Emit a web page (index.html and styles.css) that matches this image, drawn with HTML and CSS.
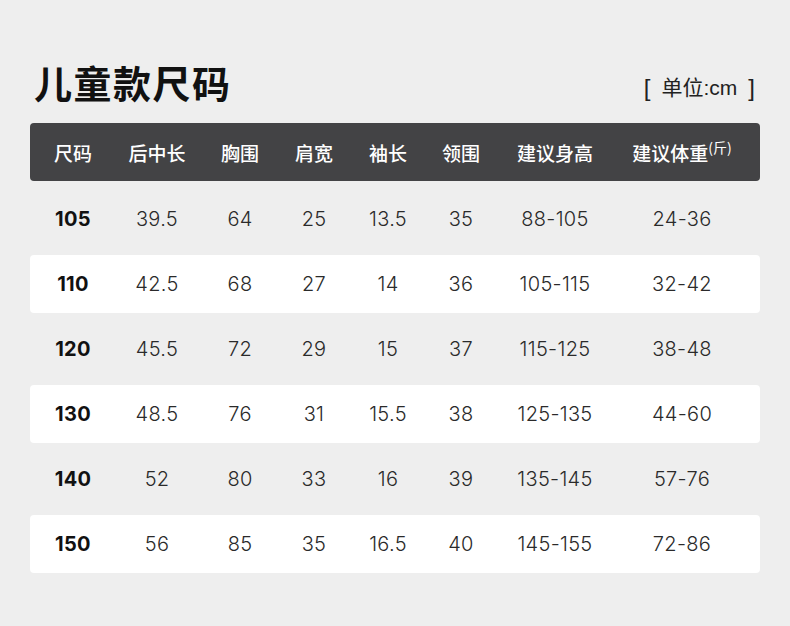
FILE: index.html
```html
<!DOCTYPE html>
<html lang="zh">
<head>
<meta charset="utf-8">
<link rel="stylesheet" href="styles.css">
</head>
<body>
<div class="page">
  <div class="head">
    <h1 class="title">儿童款尺码</h1>
    <div class="unit"><span class="br">[</span><span class="ut">单位:cm</span><span class="br">]</span></div>
  </div>
  <div class="table">
    <div class="row hdr">
      <div>尺码</div><div>后中长</div><div>胸围</div><div>肩宽</div><div>袖长</div><div>领围</div><div>建议身高</div><div>建议体重<sup>(斤)</sup></div>
    </div>
    <div class="row"><div class="sz">105</div><div>39.5</div><div>64</div><div>25</div><div>13.5</div><div>35</div><div>88-105</div><div>24-36</div></div>
    <div class="row w"><div class="sz">110</div><div>42.5</div><div>68</div><div>27</div><div>14</div><div>36</div><div>105-115</div><div>32-42</div></div>
    <div class="row"><div class="sz">120</div><div>45.5</div><div>72</div><div>29</div><div>15</div><div>37</div><div>115-125</div><div>38-48</div></div>
    <div class="row w"><div class="sz">130</div><div>48.5</div><div>76</div><div>31</div><div>15.5</div><div>38</div><div>125-135</div><div>44-60</div></div>
    <div class="row"><div class="sz">140</div><div>52</div><div>80</div><div>33</div><div>16</div><div>39</div><div>135-145</div><div>57-76</div></div>
    <div class="row w"><div class="sz">150</div><div>56</div><div>85</div><div>35</div><div>16.5</div><div>40</div><div>145-155</div><div>72-86</div></div>
  </div>
</div>
</body>
</html>
```
FILE: styles.css
```css
html, body { margin: 0; padding: 0; }
body {
  background: #eeeeee;
  width: 790px;
  height: 626px;
  overflow: hidden;
  font-family: "Noto Sans CJK SC", sans-serif;
}
.page { padding: 58px 30px 0 30px; }
.head {
  display: flex;
  justify-content: space-between;
  align-items: flex-end;
  height: 48px;
  margin-bottom: 17px;
}
.title {
  margin: 0 0 0 4px;
  font-size: 38px;
  font-weight: 700;
  line-height: 48px;
  color: #111;
  letter-spacing: 1.5px;
}
.unit {
  display: flex;
  align-items: center;
  gap: 11px;
  color: #222;
  line-height: 28px;
  margin-right: 5px;
  margin-bottom: 4px;
  font-family: "Liberation Sans", "Noto Sans CJK SC", sans-serif;
}
.unit .ut { font-size: 21px; font-weight: 400; }
.unit .br { font-weight: 400; font-size: 24px; }
.table { display: flex; flex-direction: column; gap: 7px; }
.row {
  display: grid;
  grid-template-columns: 86px 82px 84px 64px 84px 62px 126px 128px;
  padding-right: 14px;
  height: 58px;
  align-items: center;
  border-radius: 4px;
  font-family: "Inter", "Noto Sans CJK SC", sans-serif;
  font-size: 20px;
  font-weight: 300;
  color: #2a2a2a;
  letter-spacing: 0.3px;
}
.row > div { text-align: center; }
.row.w { background: #ffffff; }
.row.hdr {
  background: #434345;
  color: #fff;
  font-family: "Noto Sans CJK SC", sans-serif;
  font-weight: 500;
  font-size: 19px;
  letter-spacing: 0;
  margin-bottom: 2px;
}
.hdr sup { font-size: 14px; font-weight: 400; vertical-align: 8px; line-height: 0; }
.sz { font-weight: 700; color: #111; }
```
